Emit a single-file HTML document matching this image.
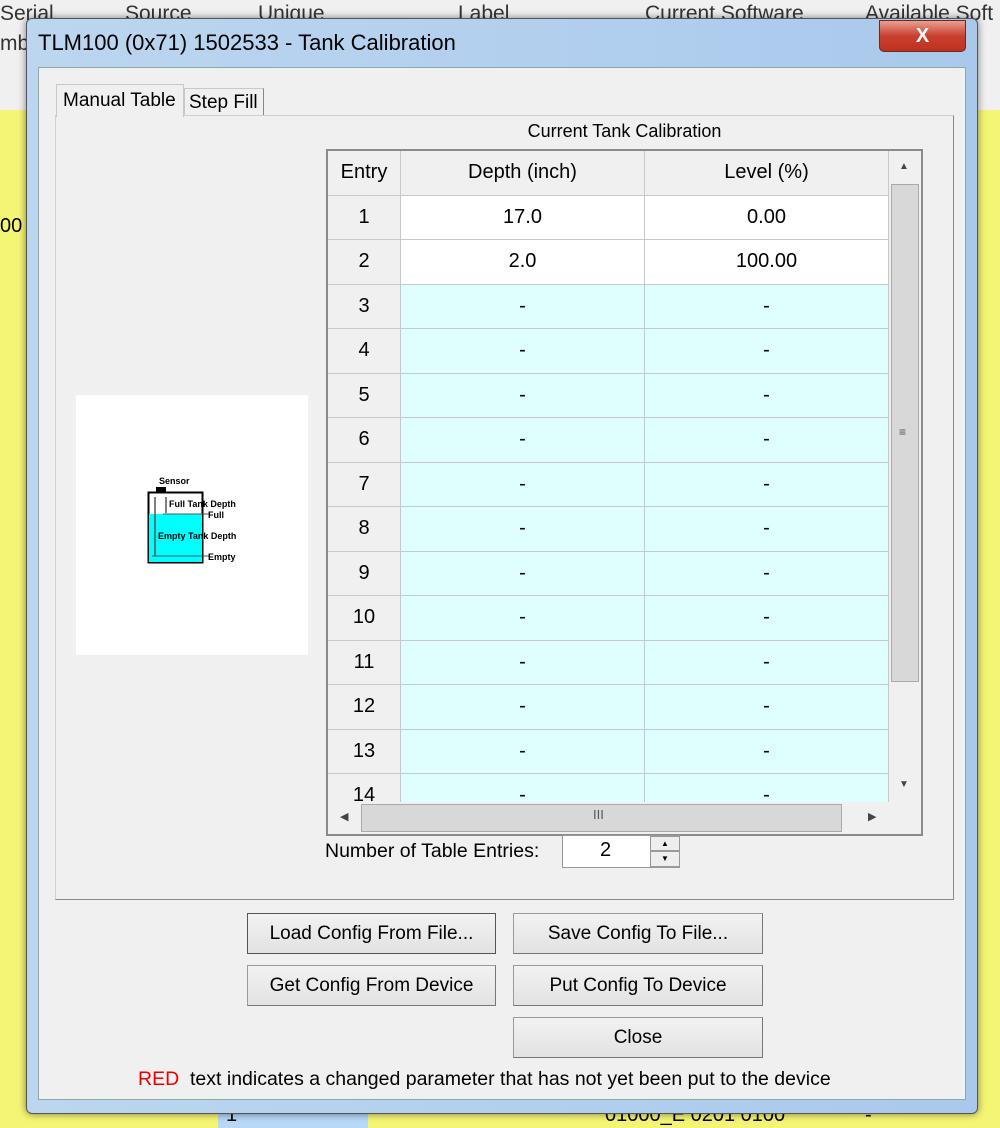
<!DOCTYPE html>
<html><head><style>
*{margin:0;padding:0;box-sizing:border-box}
body{width:1000px;height:1128px;overflow:hidden;position:relative;background:#f0f0f0;font-family:"Liberation Sans",sans-serif;color:#000}
.a{position:absolute}
.bgy{left:0;top:110px;width:1000px;height:1018px;background:#f5f575}
.win{left:26px;top:18px;width:952px;height:1096px;background:linear-gradient(90deg,#bcd6f0,#a9c9ec);border:1px solid #555;border-radius:6px;box-shadow:0 0 8px rgba(0,0,0,.5)}
.client{left:38px;top:67px;width:928px;height:1033px;background:#f0f0f0;border:1px solid #8aa}
.btn{position:absolute;background:linear-gradient(#f2f2f2,#e2e2e2);border:1px solid #9a9a9a;border-bottom-color:#777;border-right-color:#777;font-size:19px;text-align:center;line-height:40px}
.tbl{left:326px;top:149px;width:597px;height:687px;border:2px solid #8a8a8a;background:#f0f0f0;overflow:hidden}
.rows{position:absolute;left:0;top:0;width:561px;display:flex;flex-direction:column}
.row{position:relative;flex:0 0 44.5px;height:44.5px;width:561px;font-size:20px;display:flex}
.row div{height:100%;display:flex;align-items:center;justify-content:center;border-right:1px solid #c8c8c8;border-bottom:1px solid #c8c8c8}
.c0{width:73px;background:#f0f0f0}
.c1{width:244px;background:#dfffff}
.c2{width:244px;background:#dfffff}
</style></head><body>
<div class="a" style="left:0;top:0;width:1000px;height:110px;background:#f0f0f0"></div>
<div class="a" style="left:0;top:0;font-size:21px;color:#333;width:1000px">
<span class="a" style="left:0;top:2px">Serial</span><span class="a" style="left:125px;top:2px">Source</span><span class="a" style="left:258px;top:2px">Unique</span><span class="a" style="left:458px;top:2px">Label</span><span class="a" style="left:645px;top:2px">Current Software</span><span class="a" style="left:865px;top:2px">Available Soft</span>
<span class="a" style="left:0;top:32px">mb</span></div>
<div class="a bgy"></div>
<div class="a" style="left:218px;top:1100px;width:150px;height:28px;background:#b8d8f8"></div>
<div class="a" style="left:0;top:1104px;font-size:20px"><span class="a" style="left:226px">1</span><span class="a" style="left:605px;white-space:nowrap">01000_E 0201 0100</span><span class="a" style="left:865px">-</span></div>
<div class="a" style="left:0;top:215px;font-size:20px">00</div>
<div class="a win"></div>
<div class="a" style="left:38px;top:30px;font-size:22px;color:#000">TLM100 (0x71) 1502533 - Tank Calibration</div>
<div class="a" style="left:879px;top:20px;width:87px;height:32px;background:linear-gradient(#e8a090,#c94030 50%,#c03020);border:1px solid #6a2a20;border-radius:0 0 5px 5px;color:#fff;font-weight:bold;font-size:20px;text-align:center;line-height:30px">X</div>
<div class="a client"></div>
<div class="a" style="left:55px;top:115px;width:899px;height:785px;border:1px solid #d0d0d0;border-right-color:#888;border-bottom-color:#888;background:#f0f0f0"></div>
<div class="a" style="left:56px;top:84px;width:128px;height:33px;border:1px solid #c8c8c8;border-bottom:none;background:#f0f0f0;font-size:19px;padding:5px 0 0 6px">Manual Table</div>
<div class="a" style="left:184px;top:88px;width:80px;height:27px;border:1px solid #c8c8c8;border-bottom:none;border-right-color:#888;background:#f0f0f0;font-size:19px;padding:3px 0 0 4px">Step Fill</div>
<div class="a" style="left:326px;top:121px;width:597px;text-align:center;font-size:18px">Current Tank Calibration</div>
<div class="a tbl">
<div class="rows">
<div class="row"><div class="c0">Entry</div><div class="c1" style="background:#f0f0f0">Depth (inch)</div><div class="c2" style="background:#f0f0f0">Level (%)</div></div>
<div class="row"><div class="c0">1</div><div class="c1" style="background:#fff">17.0</div><div class="c2" style="background:#fff">0.00</div></div>
<div class="row"><div class="c0">2</div><div class="c1" style="background:#fff">2.0</div><div class="c2" style="background:#fff">100.00</div></div>
<div class="row"><div class="c0">3</div><div class="c1">-</div><div class="c2">-</div></div>
<div class="row"><div class="c0">4</div><div class="c1">-</div><div class="c2">-</div></div>
<div class="row"><div class="c0">5</div><div class="c1">-</div><div class="c2">-</div></div>
<div class="row"><div class="c0">6</div><div class="c1">-</div><div class="c2">-</div></div>
<div class="row"><div class="c0">7</div><div class="c1">-</div><div class="c2">-</div></div>
<div class="row"><div class="c0">8</div><div class="c1">-</div><div class="c2">-</div></div>
<div class="row"><div class="c0">9</div><div class="c1">-</div><div class="c2">-</div></div>
<div class="row"><div class="c0">10</div><div class="c1">-</div><div class="c2">-</div></div>
<div class="row"><div class="c0">11</div><div class="c1">-</div><div class="c2">-</div></div>
<div class="row"><div class="c0">12</div><div class="c1">-</div><div class="c2">-</div></div>
<div class="row"><div class="c0">13</div><div class="c1">-</div><div class="c2">-</div></div>
<div class="row"><div class="c0">14</div><div class="c1">-</div><div class="c2">-</div></div>
</div>
<div class="a" style="left:561px;top:0;width:32px;height:651px;background:#f0f0f0"></div>
<div class="a" style="left:571px;top:10px;font-size:10px;color:#444">▲</div>
<div class="a" style="left:563px;top:33px;width:28px;height:498px;background:#d8d8d8;border:1px solid #aaa"></div>
<div class="a" style="left:571px;top:274px;font-size:12px;color:#555">≡</div>
<div class="a" style="left:571px;top:628px;font-size:10px;color:#444">▼</div>
<div class="a" style="left:0;top:651px;width:593px;height:32px;background:#f0f0f0"></div>
<div class="a" style="left:12px;top:659px;font-size:11px;color:#444">◀</div>
<div class="a" style="left:33px;top:653px;width:481px;height:28px;background:#d8d8d8;border:1px solid #aaa"></div>
<div class="a" style="left:265px;top:656px;font-size:13px;color:#555">III</div>
<div class="a" style="left:540px;top:659px;font-size:11px;color:#444">▶</div>
</div>
<div class="a" style="left:325px;top:840px;font-size:19.5px">Number of Table Entries:</div>
<div class="a" style="left:562px;top:835px;width:118px;height:33px;background:#fff;border:1px solid #999"></div>
<div class="a" style="left:600px;top:839px;font-size:20px">2</div>
<div class="a" style="left:650px;top:836px;width:30px;height:15px;background:#eee;border:1px solid #999;font-size:8px;text-align:center;line-height:14px">▲</div>
<div class="a" style="left:650px;top:851px;width:30px;height:16px;background:#eee;border:1px solid #999;font-size:8px;text-align:center;line-height:14px">▼</div>
<div class="a" style="left:76px;top:395px;width:232px;height:260px;background:#fff"></div>
<svg class="a" style="left:140px;top:470px" width="110" height="100" viewBox="140 470 110 100">
<rect x="148.5" y="492.5" width="54" height="70" fill="#fff" stroke="#000" stroke-width="2"/>
<rect x="149" y="514" width="53" height="48" fill="#00ffff"/>
<rect x="156" y="487" width="10" height="5" fill="#000"/>
<line x1="155" y1="497" x2="155" y2="556" stroke="#555" stroke-width="1.5"/>
<line x1="166" y1="497" x2="166" y2="513" stroke="#555" stroke-width="1.5"/>
<line x1="163" y1="514" x2="210" y2="514" stroke="#555"/>
<line x1="152" y1="556" x2="210" y2="556" stroke="#555"/>
<text x="159" y="484" font-size="9" font-weight="bold" font-family="Liberation Sans">Sensor</text>
<text x="169" y="507" font-size="9" font-weight="bold" font-family="Liberation Sans">Full Tank Depth</text>
<text x="208" y="518" font-size="9" font-weight="bold" font-family="Liberation Sans">Full</text>
<text x="158" y="539" font-size="9" font-weight="bold" font-family="Liberation Sans">Empty Tank Depth</text>
<text x="208" y="560" font-size="9" font-weight="bold" font-family="Liberation Sans">Empty</text>
</svg>
<div class="btn" style="left:247px;top:913px;width:249px;height:41px;border:1px solid #555">Load Config From File...</div>
<div class="btn" style="left:513px;top:913px;width:250px;height:41px">Save Config To File...</div>
<div class="btn" style="left:247px;top:965px;width:249px;height:41px">Get Config From Device</div>
<div class="btn" style="left:513px;top:965px;width:250px;height:41px">Put Config To Device</div>
<div class="btn" style="left:513px;top:1017px;width:250px;height:41px">Close</div>
<div class="a" style="left:138px;top:1068px;font-size:19.5px;white-space:nowrap"><span style="color:#e00">RED</span>&nbsp; text indicates a changed parameter that has not yet been put to the device</div>
</body></html>
